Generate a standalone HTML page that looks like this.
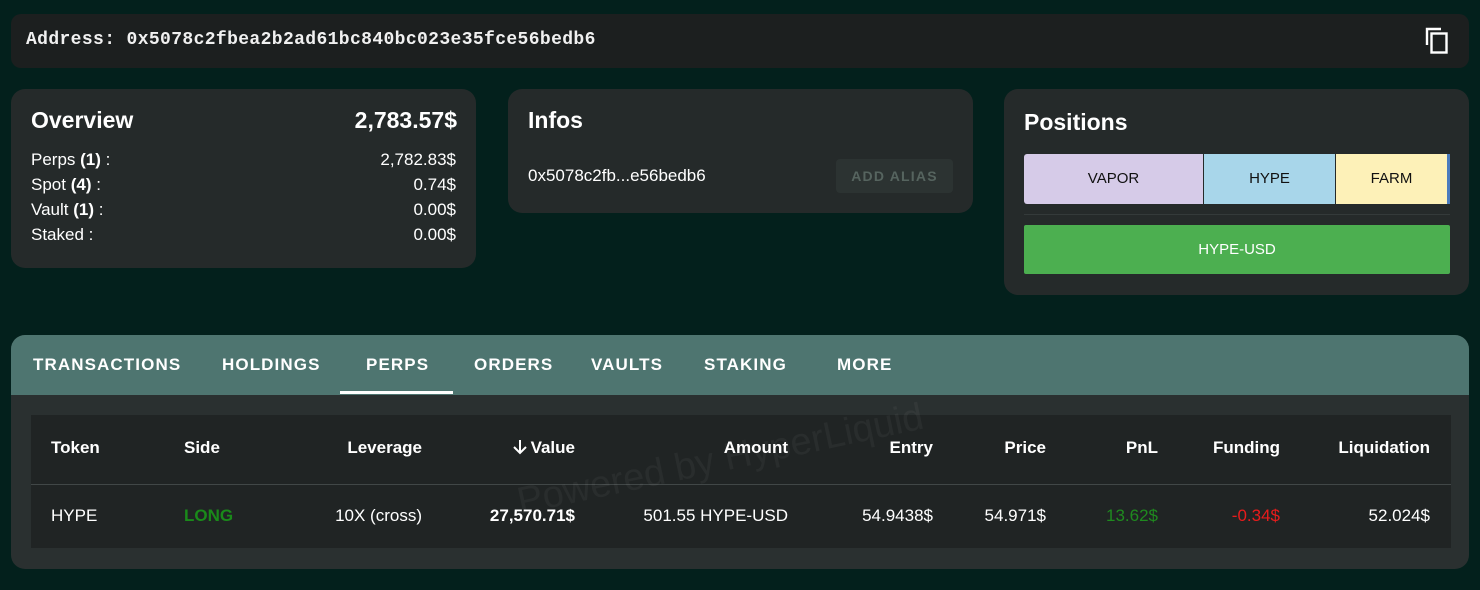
<!DOCTYPE html>
<html><head><meta charset="utf-8"><style>
*{box-sizing:border-box;margin:0;padding:0}
body{width:1480px;height:590px;background:#03201c;font-family:"Liberation Sans",sans-serif;color:#fff;position:relative;overflow:hidden}
.a{position:absolute}
.card{position:absolute;background:#252a2a;border-radius:14px}
.row{position:absolute;left:20px;right:20px;font-size:17px;display:flex;justify-content:space-between;line-height:20px}
.t{position:absolute;top:355px;font-size:17px;font-weight:bold;letter-spacing:1.1px;color:#fff;line-height:20px}
.h{position:absolute;top:438px;font-size:17px;font-weight:bold;line-height:20px}
.c{position:absolute;top:506px;font-size:17px;line-height:20px}
.r{text-align:right}
</style></head><body>
<div class="a" style="left:11px;top:14px;width:1458px;height:54px;background:#1c1f1f;border-radius:10px"></div>
<div class="a" style="left:26px;top:30px;font-family:'Liberation Mono',monospace;font-size:18px;letter-spacing:0.37px;line-height:20px;font-weight:bold;color:#f0f0f0">Address: 0x5078c2fbea2b2ad61bc840bc023e35fce56bedb6</div>
<svg class="a" style="left:1424px;top:26px" width="28" height="30" viewBox="0 0 28 30"><path d="M3 19V3h14" stroke="#fff" stroke-width="2.4" fill="none"/><rect x="7.5" y="7.5" width="15" height="19" stroke="#fff" stroke-width="2.4" fill="none"/></svg>

<div class="card" style="left:11px;top:89px;width:465px;height:179px"></div>
<div class="a" style="left:31px;top:106px;font-size:23px;font-weight:bold;line-height:28px">Overview</div>
<div class="a" style="left:300px;width:157px;text-align:right;top:106px;font-size:23px;font-weight:bold;line-height:28px">2,783.57$</div>
<div class="a" style="left:11px;width:465px;top:0">
<div class="row" style="top:150px"><span>Perps <b>(1)</b> :</span><span>2,782.83$</span></div>
<div class="row" style="top:175px"><span>Spot <b>(4)</b> :</span><span>0.74$</span></div>
<div class="row" style="top:200px"><span>Vault <b>(1)</b> :</span><span>0.00$</span></div>
<div class="row" style="top:225px"><span>Staked :</span><span>0.00$</span></div>
</div>

<div class="card" style="left:508px;top:89px;width:465px;height:124px"></div>
<div class="a" style="left:528px;top:106px;font-size:23px;font-weight:bold;line-height:28px">Infos</div>
<div class="a" style="left:528px;top:166px;font-size:17px;line-height:20px">0x5078c2fb...e56bedb6</div>
<div class="a" style="left:836px;top:159px;width:117px;height:34px;background:#2c3332;border-radius:4px;color:#56645f;font-size:14px;font-weight:bold;letter-spacing:1.2px;text-align:center;line-height:34px">ADD ALIAS</div>

<div class="card" style="left:1004px;top:89px;width:465px;height:206px"></div>
<div class="a" style="left:1024px;top:108px;font-size:23px;font-weight:bold;line-height:28px">Positions</div>
<div class="a" style="left:1024px;top:154px;width:179px;height:50px;background:#d6cbe8;border-radius:3px 0 0 3px;color:#111;font-size:15px;text-align:center;line-height:50px">VAPOR</div>
<div class="a" style="left:1204px;top:154px;width:131px;height:50px;background:#a8d6ea;color:#111;font-size:15px;text-align:center;line-height:50px">HYPE</div>
<div class="a" style="left:1336px;top:154px;width:111px;height:50px;background:#fdf1b8;color:#111;font-size:15px;text-align:center;line-height:50px">FARM</div>
<div class="a" style="left:1447px;top:154px;width:3px;height:50px;background:#4a7bbd"></div>
<div class="a" style="left:1024px;top:214px;width:426px;height:1px;background:#343a3a"></div>
<div class="a" style="left:1024px;top:225px;width:426px;height:49px;background:#4caf50;border-radius:2px;font-size:15px;text-align:center;line-height:49px">HYPE-USD</div>

<div class="a" style="left:11px;top:335px;width:1458px;height:234px;background:#2a3030;border-radius:14px;overflow:hidden">
<div style="height:60px;background:#4e7570"></div>
</div>
<div class="t" style="left:33px">TRANSACTIONS</div>
<div class="t" style="left:222px">HOLDINGS</div>
<div class="t" style="left:366px">PERPS</div>
<div class="t" style="left:474px">ORDERS</div>
<div class="t" style="left:591px">VAULTS</div>
<div class="t" style="left:704px">STAKING</div>
<div class="t" style="left:837px">MORE</div>
<div class="a" style="left:340px;top:391px;width:113px;height:3px;background:#fff"></div>

<div class="a" style="left:31px;top:415px;width:1420px;height:133px;background:#202424"></div>
<div class="a" style="left:31px;top:484px;width:1420px;height:1px;background:#414747"></div>
<div class="a" style="left:522px;top:482px;font-size:38px;color:rgba(255,255,255,0.045);transform:rotate(-12deg);transform-origin:left bottom;white-space:nowrap;line-height:40px">Powered by HyperLiquid</div>

<div class="h" style="left:51px">Token</div>
<div class="h" style="left:184px">Side</div>
<div class="h r" style="left:272px;width:150px">Leverage</div>
<div class="h r" style="left:425px;width:150px"><svg width="18" height="18" viewBox="0 0 18 18" style="vertical-align:-3px;margin-right:2px"><path d="M9 2v13M3 9l6 6 6-6" stroke="#fff" stroke-width="2" fill="none"/></svg>Value</div>
<div class="h r" style="left:638px;width:150px">Amount</div>
<div class="h r" style="left:783px;width:150px">Entry</div>
<div class="h r" style="left:896px;width:150px">Price</div>
<div class="h r" style="left:1008px;width:150px">PnL</div>
<div class="h r" style="left:1130px;width:150px">Funding</div>
<div class="h r" style="left:1280px;width:150px">Liquidation</div>

<div class="c" style="left:51px">HYPE</div>
<div class="c" style="left:184px;color:#1a8a1a;font-weight:bold">LONG</div>
<div class="c r" style="left:272px;width:150px">10X (cross)</div>
<div class="c r" style="left:425px;width:150px;font-weight:bold">27,570.71$</div>
<div class="c r" style="left:588px;width:200px">501.55 HYPE-USD</div>
<div class="c r" style="left:783px;width:150px">54.9438$</div>
<div class="c r" style="left:896px;width:150px">54.971$</div>
<div class="c r" style="left:1008px;width:150px;color:#1f8a1f">13.62$</div>
<div class="c r" style="left:1130px;width:150px;color:#e81c1c">-0.34$</div>
<div class="c r" style="left:1280px;width:150px">52.024$</div>
</body></html>
